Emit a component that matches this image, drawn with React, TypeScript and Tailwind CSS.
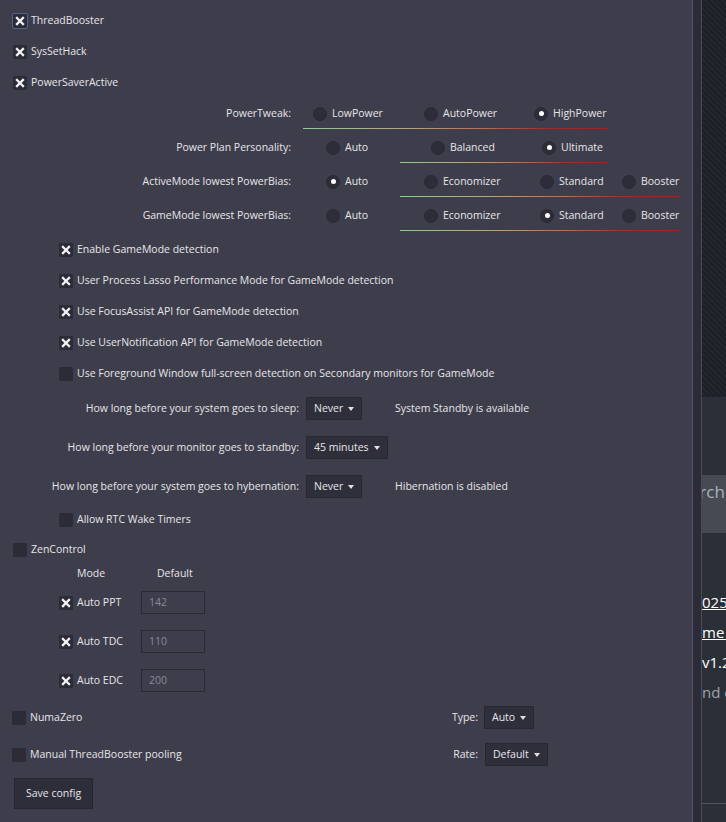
import React from 'react';

const font = { fontFamily: '"Open Sans", "Noto Sans", sans-serif' };

function XMark() {
  return (
    <svg width="14" height="14" viewBox="0 0 14 14" className="block">
      <path d="M4 4 L10 10 M10 4 L4 10" stroke="#f2f2f4" strokeWidth="2.3" strokeLinecap="square" />
    </svg>
  );
}

function Check({ checked, focused }: { checked?: boolean; focused?: boolean }) {
  return (
    <span
      className={
        'flex h-[14px] w-[14px] shrink-0 items-center justify-center rounded-[1px] bg-[#2c2b38] ' +
        (focused ? 'outline outline-1 outline-[#55628f]' : '')
      }
    >
      {checked && <XMark />}
    </span>
  );
}

function CheckRow({
  label,
  checked,
  focused,
  className,
}: {
  label: string;
  checked?: boolean;
  focused?: boolean;
  className: string;
}) {
  return (
    <div className={'flex items-center gap-[4px] ' + className}>
      <Check checked={checked} focused={focused} />
      <span className="whitespace-nowrap">{label}</span>
    </div>
  );
}

function Radio({ checked }: { checked?: boolean }) {
  return (
    <span className="flex h-[14px] w-[14px] shrink-0 items-center justify-center rounded-full border border-[#2a2935] bg-[#2d2c39]">
      {checked && <span className="h-[5px] w-[5px] rounded-full bg-white" />}
    </span>
  );
}

function Caret() {
  return <span className="ml-[5px] h-0 w-0 border-x-[3px] border-t-[4px] border-x-transparent border-t-[#e0e0e4]" />;
}

function Select({ value }: { value: string }) {
  return (
    <span className="flex h-[23px] items-center whitespace-nowrap border border-[#282733] bg-[#2f2e3b] pl-[7px] pr-[7px]">
      {value}
      <Caret />
    </span>
  );
}

type Opt = { label: string; w: string; checked?: boolean };

function RadioRow({
  label,
  start,
  opts,
  line,
}: {
  label: string;
  start: string;
  opts: Opt[];
  line: string;
}) {
  return (
    <div>
      <div className="flex h-[29px] items-center">
        <div className="w-[291px] text-right">{label}</div>
        <div className={'flex ' + start}>
          {opts.map((o) => (
            <div key={o.label} className={'flex items-center gap-[5px] ' + o.w}>
              <Radio checked={o.checked} />
              <span>{o.label}</span>
            </div>
          ))}
        </div>
      </div>
      <div
        className={
          'h-px bg-[linear-gradient(to_right,#86d38a,#bfa167_35%,#d9602f_60%,#e50f0f_80%,#f00000)] ' + line
        }
      />
      <div className="h-[4px]" />
    </div>
  );
}

function SleepRow({ label, value, note }: { label: string; value: string; note?: string }) {
  return (
    <div className="flex h-[39px] items-center">
      <div className="w-[299px] whitespace-nowrap text-right">{label}</div>
      <div className="ml-[7px] flex w-[89px]">
        <Select value={value} />
      </div>
      {note && <span>{note}</span>}
    </div>
  );
}

function AutoRow({ label, value }: { label: string; value: string }) {
  return (
    <div className="flex h-[39px] items-center pl-[59px]">
      <div className="flex w-[82px] items-center gap-[4px]">
        <Check checked />
        <span>{label}</span>
      </div>
      <span className="flex h-[23px] w-[64px] items-center border border-[#2a2934] pl-[7px] text-[#8a8a96]">
        {value}
      </span>
    </div>
  );
}

function Panel() {
  return (
    <div className="w-[692px] shrink-0 bg-[#3e3d4b] text-[10.5px] text-[#e6e6ea]" style={font}>
      <div className="pt-[5px]">
        <CheckRow className="h-[31px] pl-[13px]" label="ThreadBooster" checked focused />
        <CheckRow className="h-[31px] pl-[13px]" label="SysSetHack" checked />
        <CheckRow className="h-[31px] pl-[13px]" label="PowerSaverActive" checked />
      </div>

      <div className="mt-[1px]">
        <RadioRow
          label="PowerTweak:"
          start="ml-[22px]"
          line="ml-[303px] w-[305px]"
          opts={[
            { label: 'LowPower', w: 'w-[111px]' },
            { label: 'AutoPower', w: 'w-[110px]' },
            { label: 'HighPower', w: 'w-[100px]', checked: true },
          ]}
        />
        <RadioRow
          label="Power Plan Personality:"
          start="ml-[35px]"
          line="ml-[400px] w-[208px]"
          opts={[
            { label: 'Auto', w: 'w-[105px]' },
            { label: 'Balanced', w: 'w-[111px]' },
            { label: 'Ultimate', w: 'w-[80px]', checked: true },
          ]}
        />
        <RadioRow
          label="ActiveMode lowest PowerBias:"
          start="ml-[35px]"
          line="ml-[400px] w-[280px]"
          opts={[
            { label: 'Auto', w: 'w-[98px]', checked: true },
            { label: 'Economizer', w: 'w-[116px]' },
            { label: 'Standard', w: 'w-[82px]' },
            { label: 'Booster', w: 'w-[70px]' },
          ]}
        />
        <RadioRow
          label="GameMode lowest PowerBias:"
          start="ml-[35px]"
          line="ml-[400px] w-[280px]"
          opts={[
            { label: 'Auto', w: 'w-[98px]' },
            { label: 'Economizer', w: 'w-[116px]' },
            { label: 'Standard', w: 'w-[82px]', checked: true },
            { label: 'Booster', w: 'w-[70px]' },
          ]}
        />
      </div>

      <div className="mt-[-1px]">
        <CheckRow className="h-[31px] pl-[59px]" label="Enable GameMode detection" checked />
        <CheckRow className="h-[31px] pl-[59px]" label="User Process Lasso Performance Mode for GameMode detection" checked />
        <CheckRow className="h-[31px] pl-[59px]" label="Use FocusAssist API for GameMode detection" checked />
        <CheckRow className="h-[31px] pl-[59px]" label="Use UserNotification API for GameMode detection" checked />
        <CheckRow
          className="h-[31px] pl-[59px]"
          label="Use Foreground Window full-screen detection on Secondary monitors for GameMode"
        />
      </div>

      <SleepRow label="How long before your system goes to sleep:" value="Never" note="System Standby is available" />
      <SleepRow label="How long before your monitor goes to standby:" value="45 minutes" />
      <SleepRow label="How long before your system goes to hybernation:" value="Never" note="Hibernation is disabled" />

      <CheckRow className="h-[28px] pl-[59px]" label="Allow RTC Wake Timers" />
      <CheckRow className="h-[31px] pl-[13px]" label="ZenControl" />

      <div className="flex h-[18px] items-center pl-[77px]">
        <span className="w-[80px]">Mode</span>
        <span>Default</span>
      </div>
      <AutoRow label="Auto PPT" value="142" />
      <AutoRow label="Auto TDC" value="110" />
      <AutoRow label="Auto EDC" value="200" />

      <div className="flex h-[35px] items-center pl-[12px]">
        <div className="flex w-[466px] items-center justify-between">
          <div className="flex items-center gap-[4px]">
            <Check />
            <span>NumaZero</span>
          </div>
          <span>Type:</span>
        </div>
        <div className="ml-[6px] flex">
          <Select value="Auto" />
        </div>
      </div>
      <div className="flex h-[39px] items-center pl-[12px]">
        <div className="flex w-[466px] items-center justify-between">
          <div className="flex items-center gap-[4px]">
            <Check />
            <span>Manual ThreadBooster pooling</span>
          </div>
          <span>Rate:</span>
        </div>
        <div className="ml-[7px] flex">
          <Select value="Default" />
        </div>
      </div>

      <div className="mt-[4px] pb-[13px] pl-[14px]">
        <button className="h-[31px] border border-[#262531] bg-[#2e2d3a] px-[11px] text-[#e6e6ea]">Save config</button>
      </div>
    </div>
  );
}

function Backdrop() {
  return (
    <div className="flex min-w-0 flex-1 flex-col overflow-hidden" style={font}>
      <div className="h-[397px] shrink-0 bg-[repeating-linear-gradient(45deg,#1c1f26_0px,#1c1f26_2px,#23262d_2px,#23262d_4px)]" />
      <div className="h-[78px] shrink-0 bg-[#2b2f38]" />
      <div className="flex h-[58px] shrink-0 items-start bg-[#464a53] pt-[4px]">
        <span className="ml-[-31px] whitespace-nowrap text-[17px] text-[#aab2ba]">Search</span>
      </div>
      <div className="flex flex-1 flex-col bg-[#2b2f38] pt-[54px] text-[15px] leading-[30px]">
        <span className="whitespace-nowrap text-white underline">025 Release</span>
        <span className="whitespace-nowrap text-white underline">me changelog</span>
        <span className="whitespace-nowrap text-white">v1.2.0</span>
        <span className="whitespace-nowrap text-[#9ea4ab]">nd community</span>
        <div className="mt-[96px] border-t border-[#50545c]" />
      </div>
    </div>
  );
}

export default function App() {
  return (
    <div className="flex h-[822px] w-[726px] overflow-hidden bg-[#2b2f38]">
      <Panel />
      <div className="w-px shrink-0 bg-[#54536a]" />
      <div className="w-[8px] shrink-0 bg-[#2c2c38]" />
      <div className="w-px shrink-0 bg-[#4b4b58]" />
      <Backdrop />
    </div>
  );
}
